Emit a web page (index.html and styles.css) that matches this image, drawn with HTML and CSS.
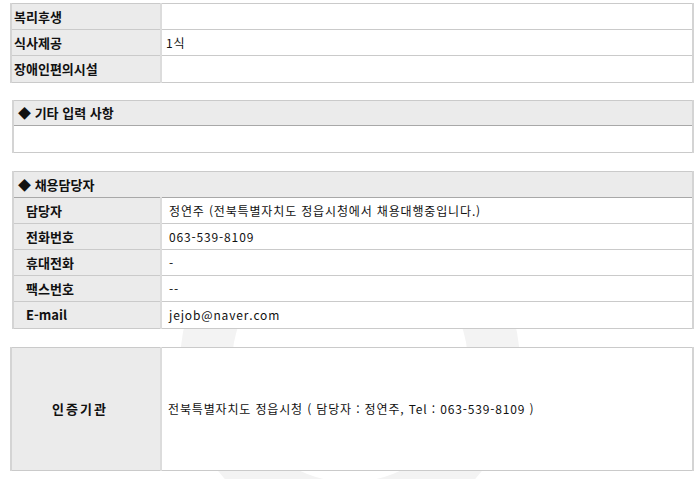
FILE: index.html
```html
<!DOCTYPE html>
<html lang="ko">
<head>
<meta charset="utf-8">
<link rel="stylesheet" href="styles.css">
</head>
<body>
<div class="page">
  <div class="watermark"></div>

  <table class="tbl tbl-basic">
    <colgroup><col class="c-label"><col></colgroup>
    <tr><th>복리후생</th><td></td></tr>
    <tr><th>식사제공</th><td>1식</td></tr>
    <tr><th>장애인편의시설</th><td></td></tr>
  </table>

  <table class="tbl tbl-section tbl-etc">
    <tr><th class="sec-head">◆ 기타 입력 사항</th></tr>
    <tr><td class="empty"></td></tr>
  </table>

  <table class="tbl tbl-section tbl-contact">
    <colgroup><col class="c-label2"><col></colgroup>
    <tr><th class="sec-head" colspan="2">◆ 채용담당자</th></tr>
    <tr><th>담당자</th><td>정연주 (전북특별자치도 정읍시청에서 채용대행중입니다.)</td></tr>
    <tr><th>전화번호</th><td>063-539-8109</td></tr>
    <tr><th>휴대전화</th><td>-</td></tr>
    <tr><th>팩스번호</th><td>--</td></tr>
    <tr><th>E-mail</th><td>jejob@naver.com</td></tr>
  </table>

  <table class="tbl tbl-cert">
    <colgroup><col class="c-label"><col></colgroup>
    <tr><th>인증기관</th><td>전북특별자치도 정읍시청 ( 담당자 : 정연주, Tel : 063-539-8109 )</td></tr>
  </table>
</div>
</body>
</html>
```

FILE: styles.css
```css
html, body {
  margin: 0;
  padding: 0;
  background: #ffffff;
}

body {
  font-family: "Noto Sans CJK KR", "Noto Sans", "Liberation Sans", sans-serif;
  font-size: 12px;
  color: #111111;
}

.page {
  position: relative;
  width: 700px;
  height: 479px;
  overflow: hidden;
  padding: 3px 6px 0 10px;
  box-sizing: border-box;
}

.watermark {
  position: absolute;
  left: 180px;
  top: 194px;
  width: 340px;
  height: 340px;
  border-radius: 50%;
  border: 52px solid #f3f3f3;
  box-sizing: border-box;
  z-index: 0;
}

.tbl {
  position: relative;
  z-index: 1;
  border-collapse: collapse;
  background: #ffffff;
  table-layout: fixed;
}

.tbl th,
.tbl td {
  padding: 0;
  border-top: 1px solid #cacaca;
  border-bottom: 1px solid #cacaca;
  line-height: 14px;
  white-space: nowrap;
  box-sizing: border-box;
}

.tbl th {
  background: #ebebeb;
  font-weight: bold;
  font-size: 13px;
  color: #111111;
  text-align: left;
  border-right: 2px solid #dcdcdc;
}

.tbl td {
  background: #ffffff;
  font-weight: normal;
  color: #111111;
  letter-spacing: 0.85px;
}

.tbl tr > :first-child { border-left: 2px solid #d4d4d4; }
.tbl tr > :last-child { border-right: 2px solid #d4d4d4; }

.c-label { width: 150px; }
.c-label2 { width: 148px; }

/* basic */
.tbl-basic {
  width: 684px;
}
.tbl-basic th {
  height: 26px;
  padding-left: 2px;
}
.tbl-basic td {
  height: 26px;
  padding-left: 4px;
}
.tbl-basic tr:last-child > * {
  height: 27px;
}

/* sections */
.tbl-section {
  width: 682px;
  margin-left: 2px;
}
.tbl .sec-head {
  height: 25px;
  padding-left: 4px;
  border-bottom: 1px solid #a8a8a8;
  border-right: 2px solid #d4d4d4;
}

.tbl-etc {
  margin-top: 17px;
}
.tbl-etc .empty {
  height: 27px;
}

.tbl-contact {
  margin-top: 18px;
}
.tbl-contact th {
  height: 26px;
  padding-left: 12px;
}
.tbl-contact td {
  height: 26px;
  padding-left: 7px;
}
.tbl-contact .sec-head {
  height: 26px;
}
.tbl-contact tr:last-child > * {
  height: 27px;
}

.tbl-cert {
  width: 684px;
  margin-top: 18px;
}
.tbl-cert th {
  height: 123px;
  text-align: center;
  padding-right: 12px;
  letter-spacing: 2px;
}
.tbl-cert td {
  height: 123px;
  padding-left: 6px;
}
```
